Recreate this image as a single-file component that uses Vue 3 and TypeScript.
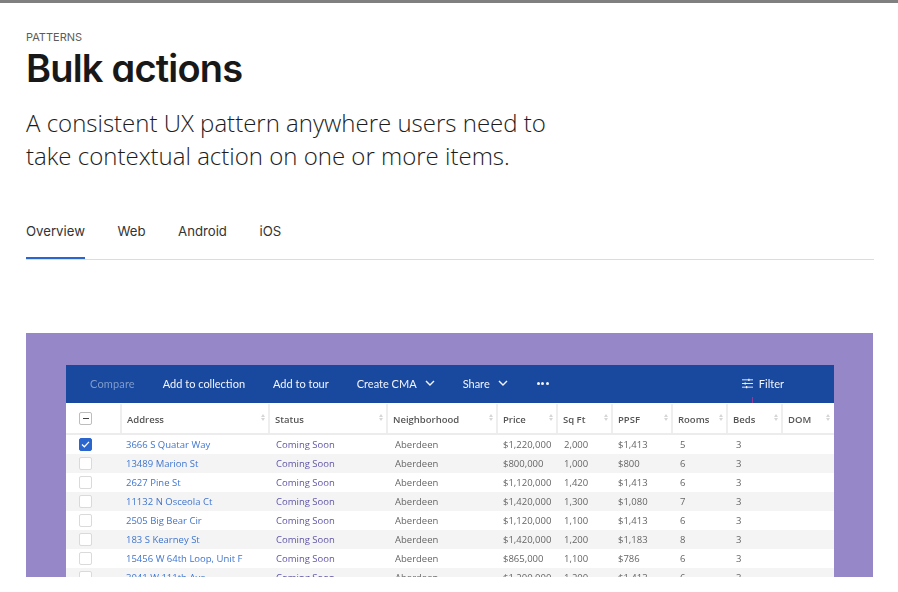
<script setup lang="ts">
interface Listing {
  address: string
  price: string
  sqft: string
  ppsf: string
  rooms: string
  beds: string
  checked?: boolean
}

const columns = ['Address', 'Status', 'Neighborhood', 'Price', 'Sq Ft', 'PPSF', 'Rooms', 'Beds', 'DOM']
const tabs = ['Overview', 'Web', 'Android', 'iOS']

const listings: Listing[] = [
  { address: '3666 S Quatar Way', price: '$1,220,000', sqft: '2,000', ppsf: '$1,413', rooms: '5', beds: '3', checked: true },
  { address: '13489 Marion St', price: '$800,000', sqft: '1,000', ppsf: '$800', rooms: '6', beds: '3' },
  { address: '2627 Pine St', price: '$1,120,000', sqft: '1,420', ppsf: '$1,413', rooms: '6', beds: '3' },
  { address: '11132 N Osceola Ct', price: '$1,420,000', sqft: '1,300', ppsf: '$1,080', rooms: '7', beds: '3' },
  { address: '2505 Big Bear Cir', price: '$1,120,000', sqft: '1,100', ppsf: '$1,413', rooms: '6', beds: '3' },
  { address: '183 S Kearney St', price: '$1,420,000', sqft: '1,200', ppsf: '$1,183', rooms: '8', beds: '3' },
  { address: '15456 W 64th Loop, Unit F', price: '$865,000', sqft: '1,100', ppsf: '$786', rooms: '6', beds: '3' },
  { address: '3041 W 111th Ave', price: '$1,200,000', sqft: '1,200', ppsf: '$1,413', rooms: '6', beds: '3' },
]
</script>

<template>
  <div class="page">
    <div class="topbar"></div>
    <main class="content">
      <div class="eyebrow">PATTERNS</div>
      <h1>Bulk actions</h1>
      <p class="lead">A consistent UX pattern anywhere users need to<br />take contextual action on one or more items.</p>

      <nav class="tabs">
        <a v-for="(tab, i) in tabs" :key="tab" class="tab" :class="{ active: i === 0 }">{{ tab }}</a>
      </nav>

      <section class="panel">
        <div class="shot">
          <div class="toolbar">
            <span class="action muted">Compare</span>
            <span class="action">Add to collection</span>
            <span class="action">Add to tour</span>
            <span class="action">
              Create CMA
              <svg class="chev" viewBox="0 0 10 6"><path d="M1 1l4 4 4-4" /></svg>
            </span>
            <span class="action">
              Share
              <svg class="chev" viewBox="0 0 10 6"><path d="M1 1l4 4 4-4" /></svg>
            </span>
            <span class="more"><i></i><i></i><i></i></span>
            <span class="filter">
              <svg viewBox="0 0 12 11" class="filter-icon">
                <path d="M0 1.5h12M0 5.5h12M0 9.5h12" />
                <path class="knob" d="M7.5 .3v2.4M3.5 4.3v2.4M5 8.3v2.4" />
              </svg>
              Filter
            </span>
            <i class="tick"></i>
          </div>

          <div class="row head">
            <div class="cell check-cell"><span class="box minus"></span></div>
            <div v-for="col in columns" :key="col" class="cell th">
              {{ col }}
              <span class="sort"><i class="up"></i><i class="down"></i></span>
            </div>
          </div>

          <div v-for="item in listings" :key="item.address" class="row body">
            <div class="cell check-cell">
              <span class="box" :class="{ checked: item.checked }">
                <svg v-if="item.checked" viewBox="0 0 10 8"><path d="M1 4l2.7 2.6L9 1" /></svg>
              </span>
            </div>
            <div class="cell link">{{ item.address }}</div>
            <div class="cell status">Coming Soon</div>
            <div class="cell hood">Aberdeen</div>
            <div class="cell price">{{ item.price }}</div>
            <div class="cell sqft">{{ item.sqft }}</div>
            <div class="cell ppsf">{{ item.ppsf }}</div>
            <div class="cell rooms">{{ item.rooms }}</div>
            <div class="cell beds">{{ item.beds }}</div>
            <div class="cell"></div>
          </div>
        </div>
      </section>
    </main>
  </div>
</template>

<style>
html,
body {
  margin: 0;
  background: #fff;
}
</style>

<style scoped>
.page {
  height: 592px;
  overflow: hidden;
  font-family: "Lato", sans-serif;
  color: #1a1a1a;
}

.topbar {
  height: 3px;
  background: #808080;
}

.content {
  padding: 28px 24px 0 26px;
}

.eyebrow {
  font-family: "Inter", sans-serif;
  font-size: 11px;
  line-height: 13px;
  color: #5c5c5c;
}

h1 {
  margin: 0;
  font-family: "Inter", sans-serif;
  font-feature-settings: "cv11";
  font-size: 38px;
  line-height: 48px;
  font-weight: 600;
  letter-spacing: -0.8px;
  color: #181818;
}

.lead {
  margin: 14px 0 0;
  font-family: "Open Sans", sans-serif;
  font-weight: 300;
  font-size: 24px;
  line-height: 33px;
  color: #1c1c1c;
}

.tabs {
  display: flex;
  gap: 32.5px;
  margin-top: 46px;
  height: 41px;
  border-bottom: 1px solid #dcdcdc;
}

.tab {
  height: 41px;
  box-sizing: border-box;
  padding-top: 4px;
  font-family: "Inter", sans-serif;
  font-feature-settings: "cv11";
  font-size: 13.2px;
  line-height: 18px;
  color: #333;
}

.tab.active {
  border-bottom: 2px solid #2b66cf;
}

.panel {
  margin: 73px 1px 0 0;
  height: 244px;
  box-sizing: border-box;
  padding: 32px 39px 0 40px;
  background: #9587c8;
  overflow: hidden;
}

.shot {
  filter: blur(0.4px);
  background: #fff;
  font-family: "Open Sans", sans-serif;
}

.toolbar {
  position: relative;
  display: flex;
  align-items: center;
  height: 38px;
  padding: 0 50px 2px 24px;
  box-sizing: border-box;
  background: #19499f;
  margin-bottom: 1px;
  font-family: "Lato", sans-serif;
  font-size: 11px;
  color: #f2f5fb;
}

.action {
  display: flex;
  align-items: center;
  gap: 8px;
  margin-right: 28px;
  white-space: nowrap;
}

.action.muted {
  letter-spacing: 0.15px;
  color: #7f9bcb;
}

.chev {
  width: 10px;
  height: 6px;
}

.chev path {
  fill: none;
  stroke: #f2f5fb;
  stroke-width: 1.4;
}

.more {
  display: flex;
  gap: 1.5px;
  margin-left: 1px;
}

.more i {
  width: 3px;
  height: 3px;
  border-radius: 50%;
  background: #f2f5fb;
}

.filter {
  display: flex;
  align-items: center;
  gap: 6px;
  margin-left: auto;
}

.filter-icon {
  width: 11px;
  height: 11px;
}

.filter-icon path {
  fill: none;
  stroke: #f2f5fb;
  stroke-width: 1;
}

.filter-icon .knob {
  stroke-width: 1.4;
}

.tick {
  position: absolute;
  left: 686px;
  bottom: 0;
  width: 1px;
  height: 6px;
  background: #8a3f9a;
}

.row {
  display: grid;
  grid-template-columns: 54px 148px 118px 110px 60px 55px 60px 55px 55px 52px;
  font-size: 9.5px;
  color: #666;
}

.head {
  height: 31px;
  background: #fff;
  border-bottom: 2px solid #ececec;
  box-sizing: border-box;
}

.body {
  height: 19px;
}

.body:nth-of-type(even) {
  background: #f4f4f4;
}

.cell {
  display: flex;
  align-items: center;
  padding-left: 6px;
  white-space: nowrap;
  min-width: 0;
}

.status {
  padding-left: 8px;
  color: #5f55a8;
}

.hood {
  padding-left: 9px;
}

.price {
  padding-left: 7px;
}

.sqft {
  padding-left: 8px;
}

.ppsf {
  padding-left: 7px;
}

.rooms {
  padding-left: 9px;
}

.beds {
  padding-left: 10px;
}

.check-cell {
  justify-content: flex-start;
  padding-left: 13px;
}

.th {
  position: relative;
  padding: 2px 0 0 5px;
  border-left: 2px solid #eeeeee;
  font-weight: 600;
  color: #555;
}

.sort {
  position: absolute;
  right: 3px;
  top: 10px;
  display: flex;
  flex-direction: column;
  gap: 1px;
}

.sort i {
  width: 0;
  height: 0;
  border-left: 2.5px solid transparent;
  border-right: 2.5px solid transparent;
}

.sort .up {
  border-bottom: 3px solid #d6d6d6;
}

.sort .down {
  border-top: 3px solid #d6d6d6;
}

.box {
  width: 13px;
  height: 13px;
  box-sizing: border-box;
  border: 1px solid #dadada;
  border-radius: 2px;
  background: #fff;
  display: flex;
  align-items: center;
  justify-content: center;
}

.box.minus {
  border-color: #bdbdbd;
}

.box.minus::after {
  content: "";
  width: 6px;
  height: 1.5px;
  background: #444;
}

.box.checked {
  border-color: #2b66cf;
  background: #2b66cf;
}

.box svg {
  width: 9px;
  height: 7px;
}

.box svg path {
  fill: none;
  stroke: #fff;
  stroke-width: 1.4;
}

.link {
  color: #3f75cf;
}
</style>
